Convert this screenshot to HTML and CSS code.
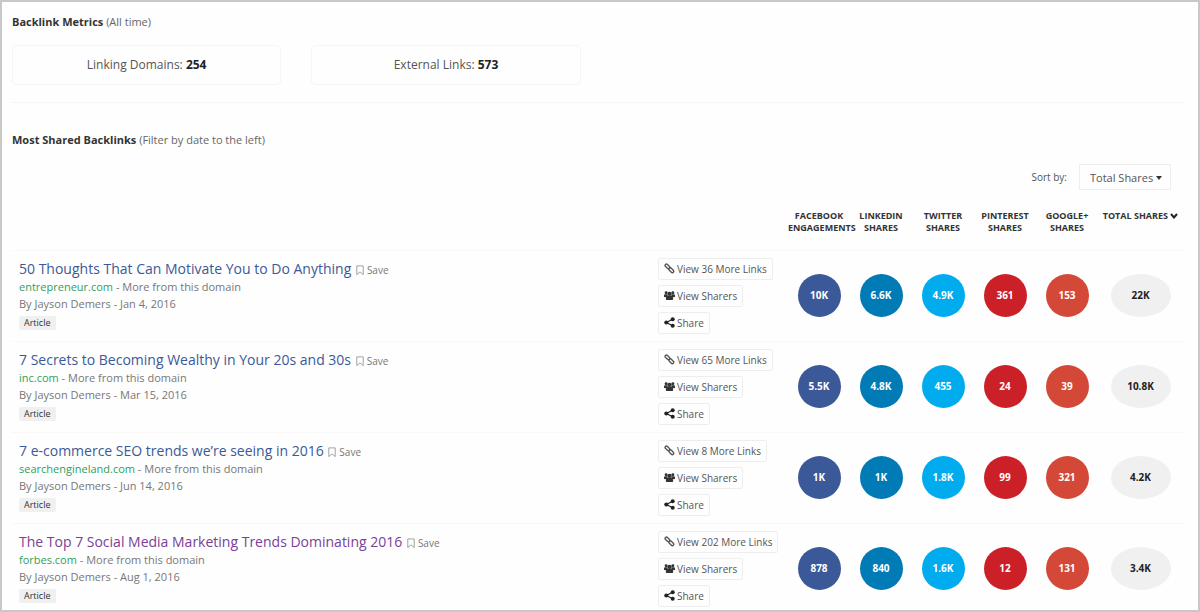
FILE: index.html
```html
<!DOCTYPE html>
<html lang="en">
<head>
    <meta charset="UTF-8">
    <title>Backlinks</title>
    <link rel="stylesheet" href="styles.css">
</head>
<body>
<!-- icons -->
<svg class="sprite" aria-hidden="true">
    <symbol id="i-save" viewBox="0 0 10 12">
        <path d="M1.5 1h7v9.5L5 7.5l-3.500 3z" fill="none" stroke="#999" stroke-width="1"/>
    </symbol>
    <symbol id="i-link" viewBox="0 0 12 12">
        <g fill="none" stroke="#555" stroke-width="1.500">
            <rect x="0.800" y="2.200" width="6" height="3" rx="1.500" transform="rotate(45 3.800 3.700)"/>
            <rect x="5" y="6.400" width="6" height="3" rx="1.500" transform="rotate(45 8 7.900)"/>
        </g>
    </symbol>
    <symbol id="i-users" viewBox="0 0 12 12">
        <g fill="#333">
            <circle cx="2.300" cy="3" r="1.600"/>
            <circle cx="9.700" cy="3" r="1.600"/>
            <circle cx="6" cy="4.200" r="2.400"/>
            <path d="M0 7.500V6.200C0 5 .8 4.500 1.600 4.600h2L4 6.500 2.800 7.800zM12 7.500V6.200c0-1.200-.8-1.700-1.600-1.600h-2L8 6.500l1.200 1.300z"/>
            <path d="M2 9.800C2 7.500 3 6.400 4.200 6.400h3.600C9 6.400 10 7.500 10 9.800c0 .8-.6 1.200-1.300 1.200H3.300C2.600 11 2 10.600 2 9.800z"/>
        </g>
    </symbol>
    <symbol id="i-share" viewBox="0 0 12 12">
        <path d="M9.500 2.500L2.500 6l7 3.500" fill="none" stroke="#222" stroke-width="1.300"/>
        <g fill="#222">
            <circle cx="2.500" cy="6" r="2.200"/>
            <circle cx="9.500" cy="2.500" r="2.200"/>
            <circle cx="9.500" cy="9.500" r="2.200"/>
        </g>
    </symbol>
</svg>

<div class="page">
    <h2 class="title">Backlink Metrics <span>(All time)</span></h2>
    <div class="metrics">
        <div class="metric">Linking Domains: <b>254</b></div>
        <div class="metric">External Links: <b>573</b></div>
    </div>

    <h2 class="title">Most Shared Backlinks <span>(Filter by date to the left)</span></h2>
    <div class="sort">
        <label for="sort">Sort by:</label>
        <div class="select">
            <select id="sort">
                <option>Total Shares</option>
            </select>
            <svg class="caret" viewBox="0 0 6 4"><path d="M0 0h6L3 4z" fill="#333"/></svg>
        </div>
    </div>

    <table class="links">
        <thead>
        <tr>
            <th class="col-info"></th>
            <th class="col-actions"></th>
            <th class="col-count">Facebook Engagements</th>
            <th class="col-count">LinkedIn Shares</th>
            <th class="col-count">Twitter Shares</th>
            <th class="col-count">Pinterest Shares</th>
            <th class="col-count">Google+ Shares</th>
            <th class="col-total">Total Shares <svg class="chevron" viewBox="0 0 8 6"><path d="M1 1l3 3.500L7 1" fill="none" stroke="#222" stroke-width="2"/></svg></th>
        </tr>
        </thead>
        <tbody>
        <tr>
            <td class="info">
                <div class="name"><a href="#">50 Thoughts That Can Motivate You to Do Anything</a> <button class="save"><svg><use href="#i-save"/></svg>Save</button></div>
                <div class="meta"><a class="domain" href="#">entrepreneur.com</a> - <a href="#">More from this domain</a></div>
                <div class="meta">By Jayson Demers - Jan 4, 2016</div>
                <span class="tag">Article</span>
            </td>
            <td>
                <div class="actions">
                    <button><svg><use href="#i-link"/></svg>View 36 More Links</button>
                    <button><svg><use href="#i-users"/></svg>View Sharers</button>
                    <button><svg><use href="#i-share"/></svg>Share</button>
                </div>
            </td>
            <td><span class="count facebook">10K</span></td>
            <td><span class="count linkedin">6.6K</span></td>
            <td><span class="count twitter">4.9K</span></td>
            <td><span class="count pinterest">361</span></td>
            <td><span class="count google">153</span></td>
            <td><span class="count total">22K</span></td>
        </tr>
        <tr>
            <td class="info">
                <div class="name"><a href="#">7 Secrets to Becoming Wealthy in Your 20s and 30s</a> <button class="save"><svg><use href="#i-save"/></svg>Save</button></div>
                <div class="meta"><a class="domain" href="#">inc.com</a> - <a href="#">More from this domain</a></div>
                <div class="meta">By Jayson Demers - Mar 15, 2016</div>
                <span class="tag">Article</span>
            </td>
            <td>
                <div class="actions">
                    <button><svg><use href="#i-link"/></svg>View 65 More Links</button>
                    <button><svg><use href="#i-users"/></svg>View Sharers</button>
                    <button><svg><use href="#i-share"/></svg>Share</button>
                </div>
            </td>
            <td><span class="count facebook">5.5K</span></td>
            <td><span class="count linkedin">4.8K</span></td>
            <td><span class="count twitter">455</span></td>
            <td><span class="count pinterest">24</span></td>
            <td><span class="count google">39</span></td>
            <td><span class="count total">10.8K</span></td>
        </tr>
        <tr>
            <td class="info">
                <div class="name"><a href="#">7 e-commerce SEO trends we’re seeing in 2016</a> <button class="save"><svg><use href="#i-save"/></svg>Save</button></div>
                <div class="meta"><a class="domain" href="#">searchengineland.com</a> - <a href="#">More from this domain</a></div>
                <div class="meta">By Jayson Demers - Jun 14, 2016</div>
                <span class="tag">Article</span>
            </td>
            <td>
                <div class="actions">
                    <button><svg><use href="#i-link"/></svg>View 8 More Links</button>
                    <button><svg><use href="#i-users"/></svg>View Sharers</button>
                    <button><svg><use href="#i-share"/></svg>Share</button>
                </div>
            </td>
            <td><span class="count facebook">1K</span></td>
            <td><span class="count linkedin">1K</span></td>
            <td><span class="count twitter">1.8K</span></td>
            <td><span class="count pinterest">99</span></td>
            <td><span class="count google">321</span></td>
            <td><span class="count total">4.2K</span></td>
        </tr>
        <tr>
            <td class="info">
                <div class="name"><a class="visited" href="#">The Top 7 Social Media Marketing Trends Dominating 2016</a> <button class="save"><svg><use href="#i-save"/></svg>Save</button></div>
                <div class="meta"><a class="domain" href="#">forbes.com</a> - <a href="#">More from this domain</a></div>
                <div class="meta">By Jayson Demers - Aug 1, 2016</div>
                <span class="tag">Article</span>
            </td>
            <td>
                <div class="actions">
                    <button><svg><use href="#i-link"/></svg>View 202 More Links</button>
                    <button><svg><use href="#i-users"/></svg>View Sharers</button>
                    <button><svg><use href="#i-share"/></svg>Share</button>
                </div>
            </td>
            <td><span class="count facebook">878</span></td>
            <td><span class="count linkedin">840</span></td>
            <td><span class="count twitter">1.6K</span></td>
            <td><span class="count pinterest">12</span></td>
            <td><span class="count google">131</span></td>
            <td><span class="count total">3.4K</span></td>
        </tr>
        </tbody>
    </table>
</div>
</body>
</html>
```
FILE: styles.css
```css
* {
    margin: 0;
    padding: 0;
    box-sizing: border-box;
}
body {
    font-family: "Open Sans", "Liberation Sans", sans-serif;
    font-size: 10px;
    color: #555;
    background: #fefefe;
}
a {
    color: inherit;
    text-decoration: none;
}
button, select {
    font: inherit;
    color: inherit;
    background: none;
    border: none;
}
.sprite {
    display: none;
}
.page {
    min-height: 100vh;
    padding: 12px 15px 0 10px;
    border: 2px solid #c8c8c8;
}
.title {
    font-size: 11px;
    line-height: 16px;
    color: #333;
}
.title span {
    font-weight: normal;
    color: #666;
}

.metrics {
    display: flex;
    gap: 30px;
    padding: 15px 0 17px;
    margin-bottom: 29px;
    border-bottom: 1px solid #f5f5f5;
}
.metric {
    width: 23%;
    font-size: 12px;
    line-height: 38px;
    text-align: center;
    border: 1px solid #f5f5f5;
    border-radius: 4px;
}
.metric b {
    color: #222;
}

.sort {
    display: flex;
    justify-content: flex-end;
    align-items: center;
    gap: 12px;
    margin: 16px 12px 20px 0;
}
.select {
    position: relative;
}
.select select {
    appearance: none;
    width: 92px;
    height: 26px;
    padding: 0 10px;
    font-size: 11px;
    border: 1px solid #eee;
}
.caret {
    position: absolute;
    top: 12px;
    right: 9px;
    width: 6px;
    height: 4px;
    pointer-events: none;
}

/* list of backlinks */
.links {
    width: 100%;
    table-layout: fixed;
    border-collapse: collapse;
}
.links th {
    height: 40px;
    font-size: 9px;
    line-height: 12px;
    color: #333;
    text-transform: uppercase;
    vertical-align: top;
}
.col-actions {
    width: 130px;
}
.links .col-count {
    width: 62px;
}
.links .col-total {
    width: 85px;
    white-space: nowrap;
}
.chevron {
    width: 8px;
    height: 6px;
}
.links td {
    padding: 7px 0;
    border-top: 1px solid #f8f8f8;
    vertical-align: middle;
}
.links tr:last-child td {
    padding-bottom: 2px;
}
.links .info {
    padding-top: 8px;
    padding-left: 7px;
    vertical-align: top;
}
.name {
    font-size: 14px;
    line-height: 19px;
    color: #3b5998;
}
.visited {
    color: #7a3f98;
}
.save {
    font-size: 10px;
    line-height: 14px;
    color: #777;
}
.save svg {
    width: 10px;
    height: 11px;
    margin-right: 2px;
    vertical-align: -2px;
}
.meta {
    font-size: 11px;
    line-height: 17px;
    color: #777;
}
.domain {
    color: #2f9e5b;
}
.tag {
    display: inline-block;
    padding: 0 5px;
    margin-top: 4px;
    font-size: 9px;
    line-height: 14px;
    color: #333;
    background: #f0f0f0;
    border-radius: 2px;
}
.actions {
    display: flex;
    flex-direction: column;
    align-items: flex-start;
    gap: 5px;
}
.actions button {
    display: flex;
    align-items: center;
    height: 22px;
    padding: 0 5px;
    border: 1px solid #eee;
    border-radius: 2px;
}
.actions svg {
    width: 11px;
    height: 11px;
    margin-right: 2px;
}

.count {
    display: block;
    width: 43px;
    margin: 0 auto;
    font-size: 10px;
    font-weight: bold;
    line-height: 43px;
    color: #fff;
    text-align: center;
    border-radius: 50%;
}
.facebook {
    background: #3b5998;
}
.linkedin {
    background: #007bb6;
}
.twitter {
    background: #00aced;
}
.pinterest {
    background: #cb2027;
}
.google {
    background: #d34836;
}
.total {
    width: 60px;
    color: #222;
    background: #f0f0f0;
}
```
